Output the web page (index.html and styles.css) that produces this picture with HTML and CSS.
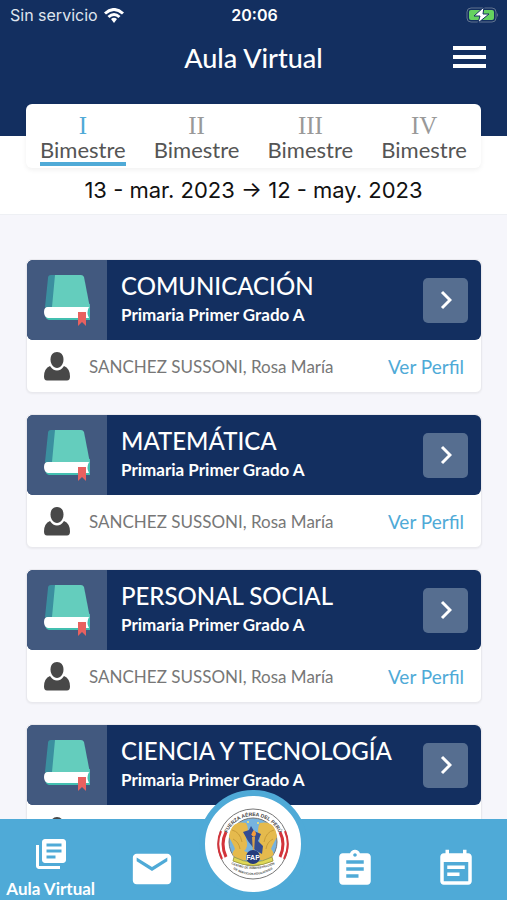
FILE: index.html
```
<!DOCTYPE html>
<html lang="es">
<head>
    <meta charset="UTF-8">
    <meta name="viewport" content="width=device-width, initial-scale=1.0">
    <title>Aula Virtual</title>
    <link rel="stylesheet" href="styles.css">
</head>
<body>
    <!-- shared icons -->
    <svg class="sprite" aria-hidden="true">
        <symbol id="book" viewBox="0 0 46 52">
            <path fill="#43bfb0" d="M2 30h44v13l1 3H5q-4-1-4-6z"/>
            <path fill="#64cdbd" d="M9 1h28q2 0 3 2l6 31H3z"/>
            <path fill="#3b8f9f" d="M7 1h4L8 33H1L4 4q0-3 3-3z"/>
            <path fill="#fff" d="M4 33h41q-3 6 0 11H4q-4-1-4-6t4-5z"/>
            <path fill="#e8615f" d="M34 38h8v14l-4-4-4 4z"/>
        </symbol>
        <symbol id="person" viewBox="0 0 26 29">
            <path fill="#484848" d="M13 0c4 0 6.500 3 6.500 7.500S16.500 16 13 16 6.500 12 6.500 7.500 9 0 13 0z"/>
            <path fill="#484848" d="M6 14q3 4.500 7 4.500t7-4.500q6 2.500 6 10.500 0 4-3 4H3q-3 0-3-4Q0 16.500 6 14z"/>
        </symbol>
        <symbol id="chevron" viewBox="0 0 12 20">
            <path d="M2 2l8 8-8 8" fill="none" stroke="#fff" stroke-width="3"/>
        </symbol>
    </svg>

    <div class="app">
        <header class="header">
            <div class="status">
                <div class="carrier">
                    Sin servicio
                    <svg width="20" height="15" viewBox="0 0 20 15" fill="none" stroke="#fff" stroke-width="3">
                        <path d="M1 5.500q9-8 18 0"/>
                        <path d="M4.500 9q5.500-5 11 0"/>
                        <path d="M7 11q3-2.500 6 0l-3 4z" fill="#fff" stroke="none"/>
                    </svg>
                </div>
                <div class="time">20:06</div>
                <svg class="battery" width="33" height="18" viewBox="0 0 33 18">
                    <rect x="1" y="2" width="29" height="14" rx="4" fill="none" stroke="#60738f"/>
                    <path d="M31 7q2 2 0 4z" fill="#60738f"/>
                    <rect x="3" y="4" width="25" height="10" rx="2" fill="#65d25f"/>
                    <path d="M18 1L8 10h6l-2 7L23 8h-6z" fill="#fff" stroke="#132f60" stroke-width="1"/>
                </svg>
            </div>
            <div class="title-bar">
                <h1>Aula Virtual</h1>
                <button class="menu" aria-label="Menú"><span></span><span></span><span></span></button>
            </div>
        </header>

        <section class="period">
            <div class="tabs">
                <button class="tab active"><span class="num">I</span><span class="name">Bimestre</span></button>
                <button class="tab"><span class="num">II</span><span class="name">Bimestre</span></button>
                <button class="tab"><span class="num">III</span><span class="name">Bimestre</span></button>
                <button class="tab"><span class="num">IV</span><span class="name">Bimestre</span></button>
            </div>
            <p class="dates">13 - mar. 2023 → 12 - may. 2023</p>
        </section>

        <main class="courses">
            <article class="card">
                <div class="course">
                    <div class="thumb"><svg class="book"><use href="#book"/></svg></div>
                    <div class="info">
                        <h2>COMUNICACIÓN</h2>
                        <p>Primaria Primer Grado A</p>
                    </div>
                    <button class="go" aria-label="Abrir Comunicación"><svg width="12" height="20"><use href="#chevron"/></svg></button>
                </div>
                <div class="teacher">
                    <svg class="person"><use href="#person"/></svg>
                    <span>SANCHEZ SUSSONI, Rosa María</span>
                    <a href="#">Ver Perfil</a>
                </div>
            </article>
            <article class="card">
                <div class="course">
                    <div class="thumb"><svg class="book"><use href="#book"/></svg></div>
                    <div class="info">
                        <h2>MATEMÁTICA</h2>
                        <p>Primaria Primer Grado A</p>
                    </div>
                    <button class="go" aria-label="Abrir Matemática"><svg width="12" height="20"><use href="#chevron"/></svg></button>
                </div>
                <div class="teacher">
                    <svg class="person"><use href="#person"/></svg>
                    <span>SANCHEZ SUSSONI, Rosa María</span>
                    <a href="#">Ver Perfil</a>
                </div>
            </article>
            <article class="card">
                <div class="course">
                    <div class="thumb"><svg class="book"><use href="#book"/></svg></div>
                    <div class="info">
                        <h2>PERSONAL SOCIAL</h2>
                        <p>Primaria Primer Grado A</p>
                    </div>
                    <button class="go" aria-label="Abrir Personal Social"><svg width="12" height="20"><use href="#chevron"/></svg></button>
                </div>
                <div class="teacher">
                    <svg class="person"><use href="#person"/></svg>
                    <span>SANCHEZ SUSSONI, Rosa María</span>
                    <a href="#">Ver Perfil</a>
                </div>
            </article>
            <article class="card">
                <div class="course">
                    <div class="thumb"><svg class="book"><use href="#book"/></svg></div>
                    <div class="info">
                        <h2>CIENCIA Y TECNOLOGÍA</h2>
                        <p>Primaria Primer Grado A</p>
                    </div>
                    <button class="go" aria-label="Abrir Ciencia y Tecnología"><svg width="12" height="20"><use href="#chevron"/></svg></button>
                </div>
                <div class="teacher">
                    <svg class="person"><use href="#person"/></svg>
                    <span>SANCHEZ SUSSONI, Rosa María</span>
                    <a href="#">Ver Perfil</a>
                </div>
            </article>
        </main>

        <nav class="bottom-nav">
            <a href="#" class="current">
                <svg width="36" height="36" viewBox="0 0 24 24"><path d="M4 6H2v14c0 1.100.9 2 2 2h14v-2H4V6zm16-4H8c-1.100 0-2 .9-2 2v12c0 1.100.9 2 2 2h12c1.100 0 2-.9 2-2V4c0-1.100-.9-2-2-2zm-1 9H9V9h10v2zm-4 4H9v-2h6v2zm4-8H9V5h10v2z"/></svg>
                <span>Aula Virtual</span>
            </a>
            <a href="#" aria-label="Mensajes">
                <svg width="46" height="46" viewBox="0 0 24 24"><path d="M20 4H4c-1.100 0-1.990.9-1.990 2L2 18c0 1.100.9 2 2 2h16c1.100 0 2-.9 2-2V6c0-1.100-.9-2-2-2zm0 4l-8 5-8-5V6l8 5 8-5v2z"/></svg>
            </a>
            <a href="#" class="home" aria-label="Inicio">
                <span class="logo">
                    <svg width="74" height="74" viewBox="0 0 74 74">
                        <defs>
                            <path id="arc-top" d="M9 37a28 28 0 0 1 56 0"/>
                            <path id="arc-bottom" d="M15 57q22 10 44 0"/>
                            <path id="arc-bottom2" d="M17 62q20 12 40 0"/>
                        </defs>
                        <circle cx="37" cy="37" r="35" fill="#fff" stroke="#777"/>
                        <path d="M5 24q-6 14 1 28" fill="none" stroke="#d3343b" stroke-width="2"/>
                        <path d="M10 25q-6 12 0 25" fill="none" stroke="#d3343b" stroke-width="3"/>
                        <path d="M69 24q6 14-1 28" fill="none" stroke="#d3343b" stroke-width="2"/>
                        <path d="M64 25q6 12 0 25" fill="none" stroke="#d3343b" stroke-width="3"/>
                        <circle cx="37" cy="35" r="24" fill="#76b3df" stroke="#777"/>
                        <path d="M30 16q-15-3-17 14 5 9 6 12-5 5 0 8 7 5 14 2 1-7-5-8 5-4 2-12 4-10 0-16z" fill="#e5ba4d"/>
                        <path d="M44 16q15-3 17 14-5 9-6 12 5 5 0 8-7 5-14 2-1-7 5-8-5-4-2-12-4-10 0-16z" fill="#e5ba4d"/>
                        <path d="M16 23q8 2 10 12M17 32q6 3 7 10M58 23q-8 2-10 12M57 32q-6 3-7 10" fill="none" stroke="#c99c38"/>
                        <path d="M27 25l6-2 2-4 3 5 7 3-3 7 5 5-1 8-7-4-7-9z" fill="#344c91"/>
                        <path d="M36 30h3l-1 16h-1z" fill="#d8a34d"/>
                        <path d="M38 23q4 4 0 7-5-2 0-7z" fill="#f49b3d"/>
                        <circle cx="32" cy="15" r="1" fill="#ffe76a"/>
                        <circle cx="42" cy="16" r="1" fill="#ffe76a"/>
                        <path d="M18 50q19 10 38 0l1 4q-20 9-40 0z" fill="#dfd857" stroke="#a4a047"/>
                        <circle cx="37" cy="50" r="7" fill="#263b7c"/>
                        <text class="faf" x="37" y="53" text-anchor="middle">FAP</text>
                        <text class="ring"><textPath href="#arc-top" startOffset="50%" text-anchor="middle">FUERZA AÉREA DEL PERÚ</textPath></text>
                        <text class="ring small"><textPath href="#arc-bottom" startOffset="50%" text-anchor="middle">CENTRO DE ADMINISTRACIÓN</textPath></text>
                        <text class="ring small"><textPath href="#arc-bottom2" startOffset="50%" text-anchor="middle">DE SERVICIOS EDUCATIVOS</textPath></text>
                    </svg>
                </span>
            </a>
            <a href="#" aria-label="Tareas">
                <svg width="42" height="42" viewBox="0 0 24 24"><path d="M19 3h-4.180C14.400 1.840 13.300 1 12 1c-1.300 0-2.400.84-2.820 2H5c-1.100 0-2 .9-2 2v14c0 1.100.9 2 2 2h14c1.100 0 2-.9 2-2V5c0-1.100-.9-2-2-2zm-7 0c.55 0 1 .45 1 1s-.45 1-1 1-1-.45-1-1 .45-1 1-1zm2 14H7v-2h7v2zm3-4H7v-2h10v2zm0-4H7V7h10v2z"/></svg>
            </a>
            <a href="#" aria-label="Calendario">
                <svg width="42" height="42" viewBox="0 0 24 24"><path d="M17 10H7v2h10v-2zm2-7h-1V1h-2v2H8V1H6v2H5c-1.110 0-1.990.9-1.990 2L3 19c0 1.100.89 2 2 2h14c1.100 0 2-.9 2-2V5c0-1.100-.9-2-2-2zm0 16H5V8h14v11zm-5-5H7v2h7v-2z"/></svg>
            </a>
        </nav>
    </div>
</body>
</html>
```
FILE: styles.css
```
* {
    box-sizing: border-box;
}
body {
    margin: 0;
    font-family: Lato, "Open Sans", sans-serif;
    background-color: #f6f6fb;
}
h1, h2, p {
    margin: 0;
}
button {
    font-family: inherit;
    border: 0;
    padding: 0;
    background: none;
    cursor: pointer;
}
a {
    text-decoration: none;
}
svg {
    display: block;
    flex-shrink: 0;
}
.sprite {
    position: absolute;
    width: 0;
    height: 0;
}
.app {
    display: flex;
    flex-direction: column;
    height: 100vh;
}

/* header */
.header {
    flex-shrink: 0;
    background-color: #132f60;
    color: #fff;
    padding-bottom: 52px;
}
.status {
    display: grid;
    grid-template-columns: 1fr auto 1fr;
    align-items: center;
    height: 30px;
    padding: 0 8px 0 10px;
    font-family: Inter, sans-serif;
    font-size: 16px;
}
.carrier {
    display: flex;
    align-items: center;
    gap: 6px;
    color: #dfe5ee;
}
.time {
    font-weight: 600;
}
.battery {
    justify-self: end;
}
.title-bar {
    display: grid;
    grid-template-columns: 1fr auto 1fr;
    align-items: center;
    height: 54px;
    padding: 0 21px;
}
h1 {
    grid-column: 2;
    font-size: 27px;
    font-weight: 500;
}
.menu {
    justify-self: end;
    display: flex;
    flex-direction: column;
    gap: 5px;
    width: 33px;
}
.menu span {
    height: 4px;
    background-color: #fff;
}

/* period tabs */
.period {
    flex-shrink: 0;
    padding: 0 26px 10px;
    background-color: #fff;
    border-bottom: 1px solid #eef0f4;
}
.tabs {
    display: grid;
    grid-template-columns: repeat(4, 1fr);
    margin-top: -32px;
    height: 64px;
    background-color: #fff;
    border-radius: 6px;
    box-shadow: 0 2px 5px rgba(0,0,0,0.06);
}
.tab {
    display: flex;
    flex-direction: column;
    align-items: center;
    padding-top: 10px;
    color: #555;
}
.num {
    font-family: "Liberation Serif", serif;
    font-size: 25px;
    line-height: 24px;
    color: #999;
}
.name {
    font-size: 22px;
    line-height: 24px;
    border-bottom: 4px solid transparent;
}
.active .num {
    color: #4faad7;
}
.active .name {
    border-color: #4faad7;
}
.dates {
    font-family: Inter, sans-serif;
    font-size: 22px;
    line-height: 28px;
    padding-top: 8px;
    text-align: center;
    color: #111;
}

/* course list */
.courses {
    flex: 1;
    min-height: 0;
    overflow-y: auto;
    scrollbar-width: none;
    padding: 44px 25px 70px 26px;
}
.card {
    margin-bottom: 21px;
    background-color: #fff;
    border: 1px solid #e9e9ee;
    border-radius: 6px;
    box-shadow: 0 1px 2px rgba(0,0,0,0.05);
}
.course {
    display: flex;
    align-items: center;
    height: 80px;
    padding-right: 13px;
    border-radius: 6px;
    background-color: #132f60;
    color: #fff;
    overflow: hidden;
}
.thumb {
    display: flex;
    align-items: center;
    justify-content: center;
    width: 80px;
    height: 80px;
    background-color: #42597f;
}
.book {
    width: 46px;
    height: 52px;
}
.info {
    flex: 1;
    padding-left: 14px;
}
h2 {
    font-size: 24px;
    font-weight: 500;
    line-height: 30px;
}
.info p {
    font-size: 17px;
    font-weight: bold;
    line-height: 28px;
}
.go {
    display: flex;
    align-items: center;
    justify-content: center;
    width: 45px;
    height: 45px;
    border-radius: 5px;
    background-color: #566e90;
}
.teacher {
    display: flex;
    align-items: center;
    height: 52px;
    padding: 0 17px;
    font-size: 17px;
    color: #777;
}
.person {
    width: 26px;
    height: 29px;
    margin-right: 19px;
}
.teacher a {
    margin-left: auto;
    font-size: 19px;
    color: #4faad7;
}

/* bottom navigation */
.bottom-nav {
    flex-shrink: 0;
    display: grid;
    grid-template-columns: repeat(5, 1fr);
    height: 81px;
    background-color: #4faad7;
}
.bottom-nav a {
    position: relative;
    display: flex;
    flex-direction: column;
    align-items: center;
    justify-content: center;
    padding-top: 17px;
    color: #fff;
    fill: #fff;
}
.bottom-nav .current {
    font-size: 17px;
    font-weight: bold;
    line-height: 24px;
    gap: 5px;
    white-space: nowrap;
}
.logo {
    position: absolute;
    top: -29px;
    left: 50%;
    margin-left: -54px;
    width: 108px;
    height: 108px;
    display: flex;
    align-items: center;
    justify-content: center;
    border: 6px solid #4faad7;
    border-radius: 50%;
    background-color: #fff;
}
.ring {
    font-family: "Liberation Sans", sans-serif;
    font-size: 5px;
    font-weight: bold;
    fill: #444;
}
.small {
    font-size: 3px;
}
.faf {
    font-family: "Liberation Sans", sans-serif;
    font-size: 7px;
    font-weight: bold;
    fill: #fff;
}
```
